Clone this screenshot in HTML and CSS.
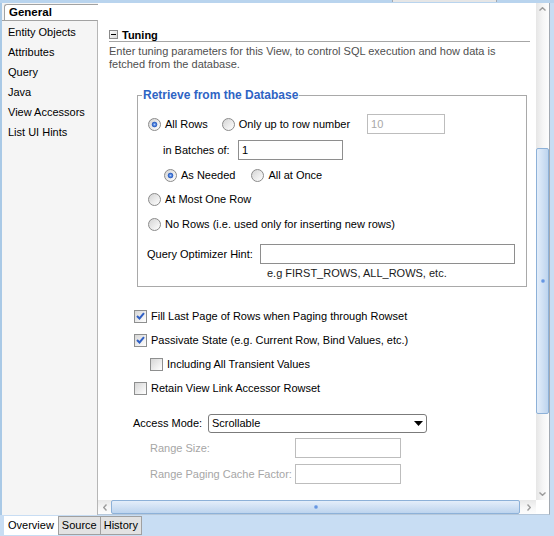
FILE: index.html
```html
<!DOCTYPE html>
<html lang="en">
<head>
<meta charset="utf-8">
<title>View Object Editor - General</title>
<link rel="stylesheet" href="styles.css">
</head>
<body>
<div class="window">
  <div class="topbar"><div class="topbar-tab"></div></div>
  <div class="main">
    <nav class="nav">
      <div class="nav-head"><div class="nav-tab">General</div></div>
      <ul class="nav-list">
        <li>Entity Objects</li>
        <li>Attributes</li>
        <li>Query</li>
        <li>Java</li>
        <li>View Accessors</li>
        <li>List UI Hints</li>
      </ul>
    </nav>
    <div class="editor">
      <div class="editor-top">
        <div class="viewport">
          <div class="sec-head"><span class="minus"></span><span>Tuning</span></div>
          <p class="desc">Enter tuning parameters for this View, to control SQL execution and how data is<br>fetched from the database.</p>

          <fieldset class="group">
            <legend>Retrieve from the Database</legend>
            <div class="frow r1">
              <label class="opt"><span class="radio on"></span>All Rows</label>
              <label class="opt opt-only"><span class="radio"></span>Only up to row number</label>
              <input class="field w-rownum" type="text" value="10" disabled>
            </div>
            <div class="frow r2">
              <span class="lbl lbl-batch">in Batches of:</span>
              <input class="field w-batch" type="text" value="1">
            </div>
            <div class="frow r3">
              <label class="opt"><span class="radio on"></span>As Needed</label>
              <label class="opt opt-once"><span class="radio"></span>All at Once</label>
            </div>
            <div class="frow r4">
              <label class="opt"><span class="radio"></span>At Most One Row</label>
            </div>
            <div class="frow r5">
              <label class="opt"><span class="radio"></span>No Rows (i.e. used only for inserting new rows)</label>
            </div>
            <div class="frow r6">
              <span class="lbl lbl-hint">Query Optimizer Hint:</span>
              <input class="field w-hint" type="text" value="">
            </div>
            <div class="hint-note">e.g FIRST_ROWS, ALL_ROWS, etc.</div>
          </fieldset>

          <div class="checks">
            <label class="cbrow"><span class="cb"><svg width="9" height="8" viewBox="0 0 9 8"><path d="M1 4 L3.5 6.5 L8 1.2" fill="none" stroke="#2f5fc4" stroke-width="2"/></svg></span>Fill Last Page of Rows when Paging through Rowset</label>
            <label class="cbrow"><span class="cb"><svg width="9" height="8" viewBox="0 0 9 8"><path d="M1 4 L3.5 6.5 L8 1.2" fill="none" stroke="#2f5fc4" stroke-width="2"/></svg></span>Passivate State (e.g. Current Row, Bind Values, etc.)</label>
            <label class="cbrow cb-indent"><span class="cb"></span>Including All Transient Values</label>
            <label class="cbrow"><span class="cb"></span>Retain View Link Accessor Rowset</label>
          </div>

          <div class="frow access">
            <span class="lbl lbl-access">Access Mode:</span>
            <div class="select"><span>Scrollable</span><svg width="9" height="5" viewBox="0 0 9 5"><path d="M0 0 H9 L4.5 5 Z" fill="#000"/></svg></div>
          </div>
          <div class="frow range range-size">
            <span class="lbl lbl-range disabled">Range Size:</span>
            <input class="field w-range" type="text" value="" disabled>
          </div>
          <div class="frow range range-factor">
            <span class="lbl lbl-range disabled">Range Paging Cache Factor:</span>
            <input class="field w-range" type="text" value="" disabled>
          </div>
        </div>
        <div class="vscroll">
          <div class="arrow arrow-up"><svg width="7" height="4" viewBox="0 0 7 4"><path d="M0.5 3.5 L3.5 0.7 L6.5 3.5" fill="none" stroke="#9c9c9c" stroke-width="1.4"/></svg></div>
          <div class="vthumb"><span class="grip"></span></div>
          <div class="vspace"></div>
          <div class="arrow arrow-down"><svg width="7" height="4" viewBox="0 0 7 4"><path d="M0.5 0.5 L3.5 3.3 L6.5 0.5" fill="none" stroke="#9c9c9c" stroke-width="1.4"/></svg></div>
        </div>
      </div>
      <div class="editor-bottom">
        <div class="hscroll">
          <div class="harrow harrow-left"><svg width="4" height="7" viewBox="0 0 4 7"><path d="M3.5 0.5 L0.7 3.5 L3.5 6.5" fill="none" stroke="#9c9c9c" stroke-width="1.4"/></svg></div>
          <div class="hthumb"><span class="grip"></span></div>
          <div class="hspace"></div>
          <div class="harrow harrow-right"><svg width="4" height="7" viewBox="0 0 4 7"><path d="M0.5 0.5 L3.3 3.5 L0.5 6.5" fill="none" stroke="#9c9c9c" stroke-width="1.4"/></svg></div>
        </div>
        <div class="corner"></div>
      </div>
    </div>
  </div>
  <div class="tabs">
    <div class="tab active">Overview</div>
    <div class="tab">Source</div>
    <div class="tab tab-last">History</div>
  </div>
</div>
</body>
</html>
```
FILE: styles.css
```css
* { box-sizing: border-box; }
html, body { margin: 0; padding: 0; }
body {
  background: #c8ddf3;
  font-family: "Liberation Sans", Arial, sans-serif;
  font-size: 11px;
  color: #000;
}
.window {
  width: 554px;
  height: 536px;
  display: flex;
  flex-direction: column;
  overflow: hidden;
}

/* top strip */
.topbar { height: 3px; background: #b9d4ee; display: flex; flex: none; }
.topbar-tab {
  margin-left: 392px;
  width: 105px;
  height: 2px;
  background: #e6e6e6;
  border-left: 1px solid #a3aab2;
  border-right: 1px solid #a3aab2;
}

.main { height: 512px; display: flex; padding-right: 4px; flex: none; }

/* navigator */
.nav {
  width: 98px;
  flex: none;
  border-left: 2px solid #a9c9e6;
  background: #f5f5f5;
  display: flex;
  flex-direction: column;
}
.nav-head { padding: 1px 0 0 2px; }
.nav-tab {
  height: 16px;
  line-height: 15px;
  padding-left: 4px;
  border-top: 1px solid #a2a2a2;
  border-left: 1px solid #a2a2a2;
  border-top-left-radius: 3px;
  background: #fff;
  font-weight: bold;
  font-size: 11.5px;
}
.nav-list {
  flex: 1;
  list-style: none;
  margin: 0;
  padding: 1px 0 0 6px;
  border-top: 1px solid #a2a2a2;
  border-right: 1px solid #b6b6b6;
}
.nav-list li { height: 20px; line-height: 20px; white-space: nowrap; }

/* editor */
.editor {
  flex: 1;
  display: flex;
  flex-direction: column;
  background: #fff;
  border-right: 1px solid #a2a9b2;
  border-bottom: 1px solid #b7c8da;
}
.editor-top { height: 497px; display: flex; flex: none; }
.viewport {
  width: 438px;
  height: 497px;
  flex: none;
  overflow: hidden;
  padding: 25px 6px 0 11px;
  background: #fff;
}

.sec-head {
  display: flex;
  align-items: center;
  gap: 4px;
  height: 14px;
  border-bottom: 1px solid #a6a6a6;
  font-weight: bold;
}
.minus {
  width: 9px;
  height: 9px;
  border: 1px solid #8a8a8a;
  background: linear-gradient(135deg, #fdfdfd, #d9d9d9);
  display: flex;
  align-items: center;
  justify-content: center;
  flex: none;
}
.minus::before { content: ""; width: 5px; height: 1px; background: #000; }

.desc { margin: 3px 0 0; line-height: 13px; color: #4f4f4f; white-space: nowrap; }

/* group box */
.group {
  margin: 17px 0 0 28px;
  width: 390px;
  min-width: 0;
  border: 1px solid #a9a9a9;
  padding: 0 0 6px 0;
}
.group legend {
  margin-left: 4px;
  padding: 0 1px;
  font-weight: bold;
  font-size: 12px;
  line-height: 14px;
  color: #2e64c4;
}

.frow { display: flex; align-items: center; height: 20px; white-space: nowrap; }
.r1 { margin-top: 12px; padding-left: 10px; }
.r2 { margin-top: 6px; padding-left: 25px; }
.r3 { margin-top: 5px; padding-left: 26px; }
.r4 { margin-top: 4px; padding-left: 10px; }
.r5 { margin-top: 5px; padding-left: 10px; }
.r6 { margin-top: 10px; padding-left: 9px; }
.hint-note { margin-top: 3px; padding-left: 129px; line-height: 13px; color: #1a1a1a; }

.opt { display: flex; align-items: center; gap: 4px; }
.opt-only { margin-left: 14px; }
.opt-once { margin-left: 16px; }

.radio {
  width: 13px;
  height: 13px;
  flex: none;
  border-radius: 50%;
  border: 1px solid #8b8b8b;
  background: linear-gradient(135deg, #d4d4d4, #ffffff);
}
.radio.on {
  background:
    radial-gradient(circle at 50% 50%, #b4d0f7 0, #5a8be0 1.2px, #2d5fc2 2.4px, rgba(45, 95, 194, 0) 3.2px),
    linear-gradient(135deg, #d4d4d4, #ffffff);
}

.lbl { flex: none; }
.lbl-batch { width: 75px; }
.lbl-hint { width: 113px; }
.lbl-access { width: 75px; }
.lbl-range { width: 145px; }
.disabled { color: #a6a6a6; }

.field {
  height: 20px;
  margin: 0;
  padding: 0 3px;
  border: 1px solid #8e8e8e;
  border-radius: 0;
  background: #fff;
  font: 11px "Liberation Sans", Arial, sans-serif;
  color: #000;
  outline: none;
  flex: none;
}
.field:disabled { border-color: #bdbdbd; background: #fff; color: #a8a8a8; }
.w-rownum { width: 78px; margin-left: 17px; }
.w-batch { width: 105px; }
.w-hint { width: 255px; }
.w-range { width: 106px; }

/* checkboxes */
.checks { margin-top: 19px; display: flex; flex-direction: column; gap: 4px; padding-left: 25px; }
.cbrow { display: flex; align-items: center; gap: 4px; height: 20px; white-space: nowrap; }
.cb-indent { margin-left: 16px; }
.cb {
  width: 13px;
  height: 13px;
  flex: none;
  border: 1px solid #8e8f8f;
  background: linear-gradient(135deg, #d6d6d6, #ffffff);
  display: flex;
  align-items: center;
  justify-content: center;
}

.access { margin-top: 15px; padding-left: 24px; }
.select {
  width: 219px;
  height: 19px;
  border: 1px solid #7b7b7b;
  border-radius: 3px;
  display: flex;
  align-items: center;
  justify-content: space-between;
  padding: 0 3px 0 3px;
}
.range { padding-left: 41px; }
.range-size { margin-top: 5px; }
.range-factor { margin-top: 6px; }

/* vertical scrollbar */
.vscroll {
  width: 13px;
  flex: none;
  display: flex;
  flex-direction: column;
  background: linear-gradient(to right, #e6e6e6, #f6f6f6 55%, #fdfdfd);
}
.arrow { height: 12px; flex: none; display: flex; align-items: center; justify-content: center; }
.vthumb {
  margin-top: 133px;
  height: 266px;
  flex: none;
  border: 1px solid #8db1d8;
  border-radius: 2px;
  background: linear-gradient(to right, #e4eefa, #bdd4ee);
  display: flex;
  align-items: center;
  justify-content: center;
}
.vspace { flex: 1; }
.grip {
  width: 4px;
  height: 4px;
  border-radius: 50%;
  background: radial-gradient(circle, #4f86de, #a8c6ef);
}

/* horizontal scrollbar */
.editor-bottom { height: 14px; display: flex; flex: none; }
.hscroll {
  width: 438px;
  flex: none;
  display: flex;
  background: linear-gradient(#e8e8e8, #f7f7f7 55%, #fdfdfd);
}
.harrow { width: 13px; flex: none; display: flex; align-items: center; justify-content: center; }
.harrow-right { width: 14px; }
.hthumb {
  width: 409px;
  flex: none;
  border: 1px solid #8db1d8;
  border-radius: 2px;
  background: linear-gradient(#e4eefa, #bdd4ee);
  display: flex;
  align-items: center;
  justify-content: center;
}
.hspace { flex: 1; }
.corner { flex: 1; background: #fff; }

/* bottom tabs */
.tabs { height: 21px; flex: none; display: flex; padding: 1px 0 0 4px; }
.tab {
  height: 19px;
  line-height: 17px;
  padding: 0 3px;
  border: 1px solid #a0a0a0;
  background: #e2e2e2;
  white-space: nowrap;
}
.tab.active { background: #fff; border-color: #fff; }
.tab-last { margin-left: -1px; }
```
